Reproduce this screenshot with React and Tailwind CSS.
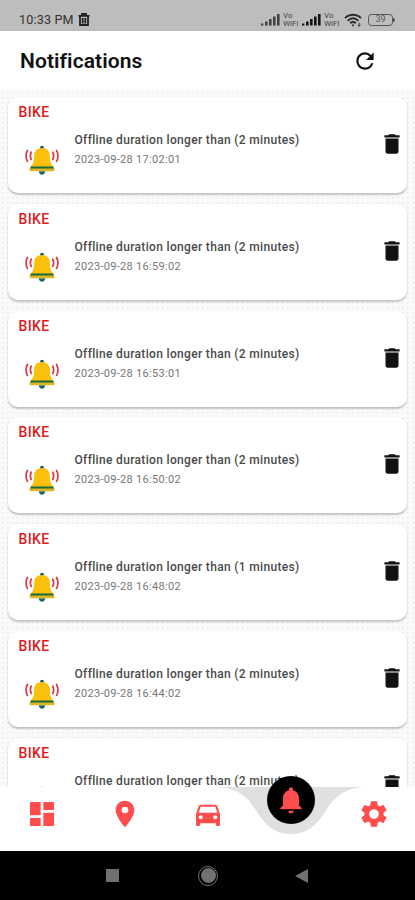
import { useState } from 'react';
import {
  MdDashboard,
  MdDelete,
  MdDirectionsCar,
  MdLocationOn,
  MdNotifications,
  MdRefresh,
  MdSettings,
} from 'react-icons/md';
import { clsx } from 'clsx';

const initialItems = [
  { id: 1, device: 'BIKE', message: 'Offline duration longer than (2 minutes)', time: '2023-09-28 17:02:01' },
  { id: 2, device: 'BIKE', message: 'Offline duration longer than (2 minutes)', time: '2023-09-28 16:59:02' },
  { id: 3, device: 'BIKE', message: 'Offline duration longer than (2 minutes)', time: '2023-09-28 16:53:01' },
  { id: 4, device: 'BIKE', message: 'Offline duration longer than (2 minutes)', time: '2023-09-28 16:50:02' },
  { id: 5, device: 'BIKE', message: 'Offline duration longer than (1 minutes)', time: '2023-09-28 16:48:02' },
  { id: 6, device: 'BIKE', message: 'Offline duration longer than (2 minutes)', time: '2023-09-28 16:44:02' },
  { id: 7, device: 'BIKE', message: 'Offline duration longer than (2 minutes)' },
];

const tabs = [
  { name: 'Dashboard', icon: MdDashboard },
  { name: 'Map', icon: MdLocationOn },
  { name: 'Vehicles', icon: MdDirectionsCar },
  { name: 'Notifications', icon: MdNotifications, active: true },
  { name: 'Settings', icon: MdSettings },
];

function SignalIcon({ faded }) {
  return (
    <svg viewBox="0 0 19 13" className={clsx('w-[19px] h-[13px]', faded ? 'text-[#444]' : 'text-[#151515]')} fill="currentColor">
      <rect x="0" y="10.5" width="2.4" height="2" />
      <rect x="4" y="8.5" width="2.6" height="4" />
      <rect x="8" y="6" width="2.6" height="6.5" />
      <rect x="12" y="3.5" width="2.6" height="9" />
      <rect x="16" y="1" width="2.6" height="11.5" />
    </svg>
  );
}

function VoWifi() {
  return (
    <div className="w-[17px] text-[8px] leading-[8px] text-[#444] whitespace-nowrap">
      <div>Vo</div>
      <div>WiFi</div>
    </div>
  );
}

function StatusBar() {
  return (
    <div className="h-[31px] shrink-0 bg-[#bdbdbd] flex items-center pl-[19px] pr-[20px] pt-2">
      <span className="w-[56px] text-[12.6px] leading-4 tracking-[0.15px] text-[#333] whitespace-nowrap">10:33 PM</span>
      <svg viewBox="0 0 12 13" className="ml-[3px] w-3 h-[13px]" fill="none" stroke="#222" strokeWidth="1.8">
        <path d="M0.5 2.8h11M4 2.5V1h4v1.5M2 3v9h8V3M4.7 5v5.5M7.3 5v5.5" />
      </svg>

      <div className="ml-auto flex items-center">
        <SignalIcon faded />
        <div className="ml-[3px]"><VoWifi /></div>
        <div className="ml-[2px]"><SignalIcon /></div>
        <div className="ml-[3px]"><VoWifi /></div>
        <svg viewBox="0 0 18 14" className="ml-[3px] mr-px w-[18px] h-[14px]" fill="none" stroke="#2b2b2b" strokeWidth="1.8">
          <path d="M1 5.2C5.5 0.6 12.5 0.6 17 5.2M3.6 7.8C7 4.6 11 4.6 14.4 7.8M6.2 10.2c1.8-1.5 3.8-1.5 5.6 0" />
          <circle cx="9" cy="12.3" r="1" fill="#2b2b2b" stroke="none" />
          <path d="M15.2 9.8v3.4M13.8 11.8l1.4 1.4 1.4-1.4" strokeWidth="0.9" />
        </svg>
        <div className="ml-[5px] flex items-center">
          <div className="w-[25px] h-[12px] rounded-[3.5px] border-[1.5px] border-[#555] flex items-center justify-center text-[9px] leading-none text-[#555]">
            39
          </div>
          <div className="w-[2px] h-1 rounded-r bg-[#555]" />
        </div>
      </div>
    </div>
  );
}

function RingingBell() {
  return (
    <svg viewBox="0 0 36 32" className="w-9 h-8" fill="none">
      <g stroke="#dd3b43" strokeWidth="1.7" strokeLinecap="round">
        <path d="M3.4 6.5c-1.7 3.4-1.7 7.4 0 10.8" />
        <path d="M7.2 8.2c-1.1 2.3-1.1 4.9 0 7.2" />
        <path d="M32.6 6.5c1.7 3.4 1.7 7.4 0 10.8" />
        <path d="M28.8 8.2c1.1 2.3 1.1 4.9 0 7.2" />
      </g>
      <circle cx="18" cy="3.6" r="1.9" fill="#1b5960" />
      <path d="M14.8 27.2h6.4c0 4.6-6.4 4.6-6.4 0z" fill="#1b6570" />
      <path d="M18 4c-5 0-7.9 3.4-7.9 7.8 0 5.8-.8 8.4-4 11.2h23.800c-3.200-2.800-4-5.400-4-11.200 0-4.400-2.900-7.800-7.900-7.800z" fill="#fbc00c" />
      <path d="M6.8 22.4h22.4l.8 2.500H6z" fill="#176a3e" />
      <path d="M5.8 24.6h24.4c1 1.400.2 2.700-1.400 2.700H7.2C5.6 27.300 4.8 26 5.800 24.600z" fill="#dfb821" />
    </svg>
  );
}

function NotificationCard({ item, onDelete }) {
  return (
    <div className="h-[96px] shrink-0 rounded-[10px] bg-white shadow-[0_1.5px_2px_rgba(0,0,0,0.22)] pl-[10.5px] pr-[2px] pt-[7px]">
      <div className="h-4 text-[14px] leading-4 font-medium tracking-[0.4px] text-[#e01a1a]">{item.device}</div>
      <div className="flex">
        <div className="w-[56px] pl-[5.5px] pt-[24px]">
          <RingingBell />
        </div>
        <div className="pt-[12px] whitespace-nowrap">
          <p className="text-[12px] leading-4 font-medium tracking-[0.33px] text-[#4a4a4a]">{item.message}</p>
          {item.time && (
            <p className="mt-[4px] text-[11px] leading-4 tracking-[0.3px] text-[#777]">{item.time}</p>
          )}
        </div>
        <button type="button" aria-label="Delete" onClick={() => onDelete(item.id)} className="ml-auto mt-[11px] h-[26px] text-[#111]">
          <MdDelete size={26} />
        </button>
      </div>
    </div>
  );
}

function BottomNav() {
  return (
    <nav className="relative h-[64px] shrink-0 bg-white">
      {/* Notch behind the active tab */}
      <svg viewBox="0 0 150 48" className="absolute left-[216px] top-0 w-[150px] h-12" fill="#e0e0e0">
        <path d="M0 0C24 1 32 11 41 25C50 39 59 47 75 47C91 47 100 39 109 25C118 11 126 1 150 0Z" />
      </svg>
      <div className="relative grid grid-cols-5">
        {tabs.map(({ name, icon: Icon, active }) => (
          <button
            key={name}
            type="button"
            aria-label={name}
            className={clsx(
              'flex items-center justify-center text-[#ff4c4c]',
              active ? 'w-12 h-12 -mt-[11px] justify-self-center rounded-full bg-black' : 'h-[53px]'
            )}
          >
            <Icon size={32} />
          </button>
        ))}
      </div>
    </nav>
  );
}

function SystemBar() {
  return (
    <div className="h-[49px] shrink-0 bg-black flex items-center">
      <div className="ml-[106px] w-[13px] h-[13px] bg-[#707070]" />
      <div className="ml-[79px] w-5 h-5 rounded-full border-[1.5px] border-[#777] flex items-center justify-center">
        <div className="w-[15px] h-[15px] rounded-full bg-[#707070]" />
      </div>
      <svg viewBox="0 0 13 14" className="ml-[77px] w-[13px] h-[14px]" fill="#707070">
        <path d="M13 0v14L0 7z" />
      </svg>
    </div>
  );
}

export default function App() {
  const [items, setItems] = useState(initialItems);

  const handleDelete = (id) => {
    setItems(items.filter((item) => item.id !== id));
  };

  return (
    <div className="w-[415px] h-[900px] flex flex-col overflow-hidden bg-white font-[Roboto,sans-serif]">
      <StatusBar />

      {/* Header */}
      <header className="h-[59px] shrink-0 flex items-center justify-between pl-5 pr-[37px] pt-px">
        <h1 className="text-[21px] leading-6 font-semibold tracking-[0.08px] text-[#111]">Notifications</h1>
        <button type="button" aria-label="Refresh" onClick={() => setItems(initialItems)} className="text-[#111]">
          <MdRefresh size={26} />
        </button>
      </header>

      {/* List */}
      <main className="flex-1 min-h-0 overflow-hidden bg-[#fafafa] bg-[radial-gradient(#ededed_1px,transparent_1px)] bg-[size:5px_5px] flex flex-col gap-[10.8px] px-2 pt-[7px]">
        {items.map((item) => (
          <NotificationCard key={item.id} item={item} onDelete={handleDelete} />
        ))}
      </main>

      <BottomNav />
      <SystemBar />
    </div>
  );
}
